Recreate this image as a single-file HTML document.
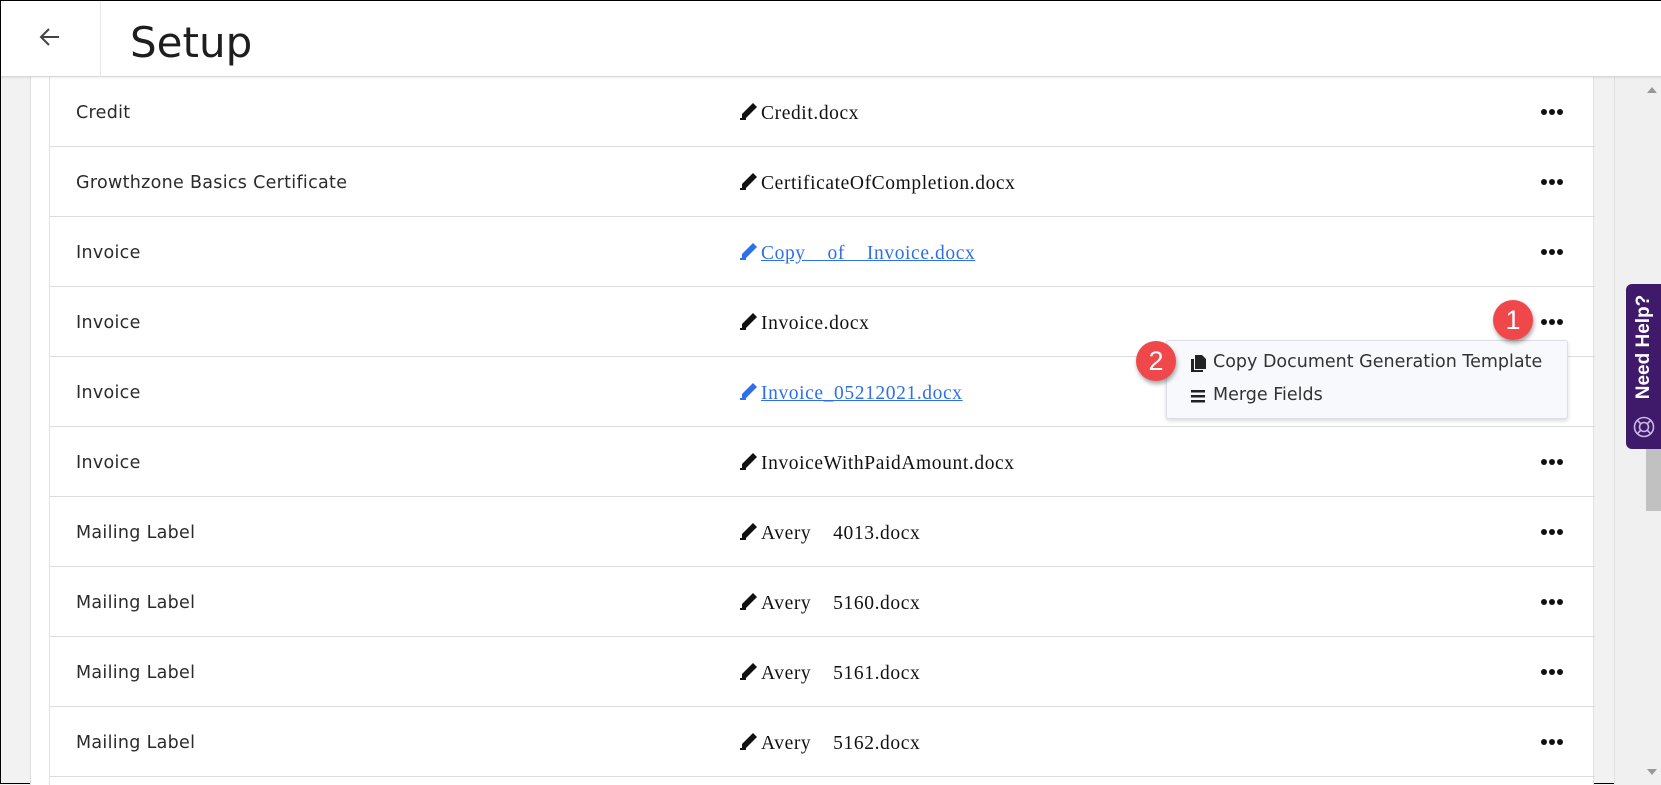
<!DOCTYPE html>
<html><head><style>
*{margin:0;padding:0;box-sizing:border-box}
body{width:1661px;height:784px;overflow:hidden;background:#f2f2f2;font-family:"Liberation Sans",sans-serif;position:relative;border:1px solid #000}
.hdr{position:absolute;left:0;top:0;width:1661px;height:76px;background:#fff;border-bottom:1px solid #d8d8d8;box-shadow:0 1px 2px rgba(0,0,0,.08);z-index:3}
.hdr .div{position:absolute;left:99px;top:0;width:1px;height:76px;background:#e6e6e6}
.hdr h1{position:absolute;left:129px;top:17px;font-weight:normal;font-size:42px;color:#1e1e1e;font-family:"DejaVu Sans","Liberation Sans",sans-serif;letter-spacing:0}
.lstrip{position:absolute;left:29px;top:76px;width:19px;height:708px;background:#fff;border-left:1px solid #dedede}
.panel{position:absolute;left:48px;top:76px;width:1545px;height:708px;background:#fff;border-left:1px solid #e2e2e2;border-right:1px solid #e2e2e2}
.row{position:absolute;left:0;width:1545px;height:70px;border-bottom:1px solid #dcdcdc}
.t{position:absolute;left:26px;top:26px;color:#2b2b2b;font-family:"DejaVu Sans","Liberation Sans",sans-serif;font-size:17.5px;letter-spacing:.3px}
.f{position:absolute;left:689px;top:25px;font-family:"Liberation Serif",serif;font-size:19.5px;letter-spacing:.6px;color:#111;white-space:pre}
.f.a{color:#2f6fe8;text-decoration:underline}
.f svg{vertical-align:-1px;margin-right:2px}
.dots{position:absolute;left:1491px;top:32px;width:22px;height:6px}
.dots i{position:absolute;top:0;width:6px;height:6px;border-radius:50%;background:#111}
.sb{position:absolute;left:1613px;top:76px;width:48px;height:708px;background:#f0f0f0;border-left:1px solid #e0e0e0}
.thumb{position:absolute;left:1645px;top:290px;width:16px;height:220px;background:#c1c1c1}
.help{position:absolute;left:1625px;top:283px;width:36px;height:165px;background:#3f1a6b;border-radius:6px 0 0 6px;z-index:4}
.help span{position:absolute;left:-38px;top:52px;transform:rotate(-90deg);color:#fff;font-weight:bold;font-size:19px;width:112px;text-align:center}
.menu{position:absolute;left:1165px;top:339px;width:402px;height:79px;background:#f7f9fc;border:1px solid #dcdfe4;border-radius:3px;box-shadow:0 2px 4px rgba(0,0,0,.15);z-index:5;font-family:"DejaVu Sans","Liberation Sans",sans-serif;font-size:17.5px;color:#333}
.menu div{position:absolute;left:24px;white-space:nowrap}
.badge{position:absolute;width:40px;height:40px;border-radius:50%;background:#f0474b;color:#fff;font-size:27px;text-align:center;line-height:40px;box-shadow:1px 3px 4px rgba(0,0,0,.35);z-index:6}
</style></head><body>
<div class="hdr"><div class="div"></div>
<svg style="position:absolute;left:38px;top:26px" width="22" height="20" viewBox="0 0 22 20"><path d="M20 10H3M10 2L2 10l8 8" fill="none" stroke="#444" stroke-width="2"/></svg>
<h1>Setup</h1></div>
<div class="lstrip"></div>
<div class="panel">
<div class="row" style="top:0"><div class="t">Credit</div><div class="f"><svg width="20" height="18" viewBox="0 0 20 18"><path d="M14 1l4 4L7 16H3v-4z" fill="#111"/><path d="M1 17h6" stroke="#111" stroke-width="2"/></svg>Credit.docx</div><div class="dots"><i style="left:0"></i><i style="left:8px"></i><i style="left:16px"></i></div></div>
<div class="row" style="top:70px"><div class="t">Growthzone Basics Certificate</div><div class="f"><svg width="20" height="18" viewBox="0 0 20 18"><path d="M14 1l4 4L7 16H3v-4z" fill="#111"/><path d="M1 17h6" stroke="#111" stroke-width="2"/></svg>CertificateOfCompletion.docx</div><div class="dots"><i style="left:0"></i><i style="left:8px"></i><i style="left:16px"></i></div></div>
<div class="row" style="top:140px"><div class="t">Invoice</div><div class="f a"><svg width="20" height="18" viewBox="0 0 20 18"><path d="M14 1l4 4L7 16H3v-4z" fill="#2f6fe8"/><path d="M1 17h6" stroke="#2f6fe8" stroke-width="2"/></svg>Copy    of    Invoice.docx</div><div class="dots"><i style="left:0"></i><i style="left:8px"></i><i style="left:16px"></i></div></div>
<div class="row" style="top:210px"><div class="t">Invoice</div><div class="f"><svg width="20" height="18" viewBox="0 0 20 18"><path d="M14 1l4 4L7 16H3v-4z" fill="#111"/><path d="M1 17h6" stroke="#111" stroke-width="2"/></svg>Invoice.docx</div><div class="dots"><i style="left:0"></i><i style="left:8px"></i><i style="left:16px"></i></div></div>
<div class="row" style="top:280px"><div class="t">Invoice</div><div class="f a"><svg width="20" height="18" viewBox="0 0 20 18"><path d="M14 1l4 4L7 16H3v-4z" fill="#2f6fe8"/><path d="M1 17h6" stroke="#2f6fe8" stroke-width="2"/></svg>Invoice_05212021.docx</div></div>
<div class="row" style="top:350px"><div class="t">Invoice</div><div class="f"><svg width="20" height="18" viewBox="0 0 20 18"><path d="M14 1l4 4L7 16H3v-4z" fill="#111"/><path d="M1 17h6" stroke="#111" stroke-width="2"/></svg>InvoiceWithPaidAmount.docx</div><div class="dots"><i style="left:0"></i><i style="left:8px"></i><i style="left:16px"></i></div></div>
<div class="row" style="top:420px"><div class="t">Mailing Label</div><div class="f"><svg width="20" height="18" viewBox="0 0 20 18"><path d="M14 1l4 4L7 16H3v-4z" fill="#111"/><path d="M1 17h6" stroke="#111" stroke-width="2"/></svg>Avery    4013.docx</div><div class="dots"><i style="left:0"></i><i style="left:8px"></i><i style="left:16px"></i></div></div>
<div class="row" style="top:490px"><div class="t">Mailing Label</div><div class="f"><svg width="20" height="18" viewBox="0 0 20 18"><path d="M14 1l4 4L7 16H3v-4z" fill="#111"/><path d="M1 17h6" stroke="#111" stroke-width="2"/></svg>Avery    5160.docx</div><div class="dots"><i style="left:0"></i><i style="left:8px"></i><i style="left:16px"></i></div></div>
<div class="row" style="top:560px"><div class="t">Mailing Label</div><div class="f"><svg width="20" height="18" viewBox="0 0 20 18"><path d="M14 1l4 4L7 16H3v-4z" fill="#111"/><path d="M1 17h6" stroke="#111" stroke-width="2"/></svg>Avery    5161.docx</div><div class="dots"><i style="left:0"></i><i style="left:8px"></i><i style="left:16px"></i></div></div>
<div class="row" style="top:630px"><div class="t">Mailing Label</div><div class="f"><svg width="20" height="18" viewBox="0 0 20 18"><path d="M14 1l4 4L7 16H3v-4z" fill="#111"/><path d="M1 17h6" stroke="#111" stroke-width="2"/></svg>Avery    5162.docx</div><div class="dots"><i style="left:0"></i><i style="left:8px"></i><i style="left:16px"></i></div></div>
</div>
<div class="sb"><svg style="position:absolute;left:32px;top:10px" width="10" height="6"><path d="M0 6L5 0l5 6z" fill="#999"/></svg><svg style="position:absolute;left:32px;top:692px" width="10" height="6"><path d="M0 0l5 6 5-6z" fill="#999"/></svg></div>
<div class="thumb"></div>
<div class="help"><span>Need Help?</span>
<svg style="position:absolute;left:7px;top:132px" width="22" height="22" viewBox="0 0 22 22" fill="none" stroke="#cbb8e6" stroke-width="1.6"><circle cx="11" cy="11" r="9.5"/><circle cx="11" cy="11" r="4.5"/><path d="M4.5 4.5l3.3 3.3M17.5 4.5l-3.3 3.3M4.5 17.5l3.3-3.3M17.5 17.5l-3.3-3.3"/></svg></div>
<div class="menu">
<svg style="position:absolute;left:24px;top:14px" width="15" height="17" viewBox="0 0 15 17"><path d="M4 0h7l4 4v10H4z" fill="#222"/><path d="M0 4h3v11h9v2H0z" fill="#222"/></svg>
<div style="left:46px;top:11px">Copy Document Generation Template</div>
<svg style="position:absolute;left:24px;top:49px" width="14" height="13"><rect y="0" width="14" height="2.5" fill="#222"/><rect y="5" width="14" height="2.5" fill="#222"/><rect y="10" width="14" height="2.5" fill="#222"/></svg>
<div style="left:46px;top:44px">Merge Fields</div>
</div>
<div class="badge" style="left:1492px;top:299px">1</div>
<div class="badge" style="left:1135px;top:340px">2</div>
</body></html>
